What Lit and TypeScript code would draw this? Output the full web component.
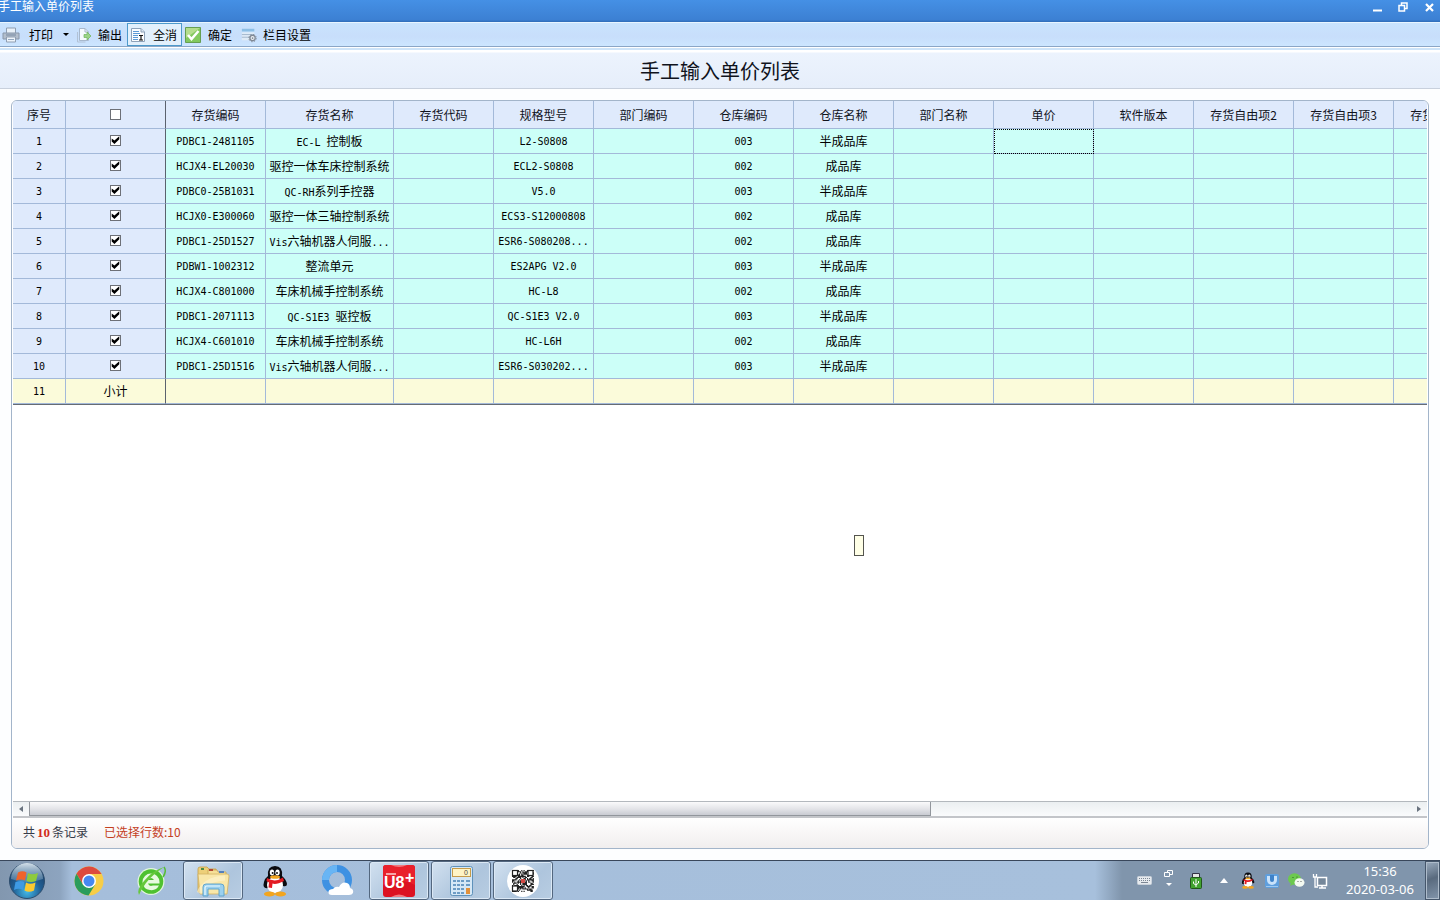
import { LitElement, html, css, svg } from "lit";
import { customElement, state } from "lit/decorators.js";
import { classMap } from "lit/directives/class-map.js";

interface Row {
  code: string;
  name: string;
  spec: string;
  depot: string;
  depotName: string;
}

const row = (code: string, name: string, spec: string, depot: string): Row => ({
  code, name, spec, depot, depotName: depot === "003" ? "半成品库" : "成品库",
});

const ROWS: Row[] = [
  row("PDBC1-2481105", "EC-L 控制板", "L2-S0808", "003"),
  row("HCJX4-EL20030", "驱控一体车床控制系统", "ECL2-S0808", "002"),
  row("PDBC0-25B1031", "QC-RH系列手控器", "V5.0", "003"),
  row("HCJX0-E300060", "驱控一体三轴控制系统", "ECS3-S12000808", "002"),
  row("PDBC1-25D1527", "Vis六轴机器人伺服...", "ESR6-S080208...", "002"),
  row("PDBW1-1002312", "整流单元", "ES2APG V2.0", "003"),
  row("HCJX4-C801000", "车床机械手控制系统", "HC-L8", "002"),
  row("PDBC1-2071113", "QC-S1E3 驱控板", "QC-S1E3 V2.0", "003"),
  row("HCJX4-C601010", "车床机械手控制系统", "HC-L6H", "002"),
  row("PDBC1-25D1516", "Vis六轴机器人伺服...", "ESR6-S030202...", "003"),
];

const HEADERS = ["存货编码", "存货名称", "存货代码", "规格型号", "部门编码", "仓库编码", "仓库名称", "部门名称", "单价", "软件版本", "存货自由项2", "存货自由项3", "存货自由项4"];

/* Latin runs are set smaller than the Chinese ones so both sit on a half-width grid. */
const mixed = (text: string) =>
  text.split(/([\u4e00-\u9fff]+)/).filter(Boolean).map((part) =>
    /[\u4e00-\u9fff]/.test(part) ? html`<span class="han">${part}</span>` : part);

const penguin = svg`
  <path d="M7 23 Q1 24 3 17 Q4 13 7 11 Q6 1 14 1 Q22 1 21 11 Q25 14 26 19 Q26 22 22 21Z" fill="#0b0b10"/>
  <ellipse cx="14" cy="20" rx="8" ry="8" fill="#fff"/>
  <ellipse cx="11" cy="7.500" rx="2.200" ry="3" fill="#fff"/><ellipse cx="16.500" cy="7.500" rx="2.200" ry="3" fill="#fff"/>
  <circle cx="11.600" cy="8" r="1" fill="#111"/><circle cx="16" cy="8" r="1" fill="#111"/>
  <ellipse cx="14" cy="12" rx="5" ry="1.800" fill="#f3a51f"/>
  <path d="M6 13 Q14 18 22 12.500 L23 16 Q15 20 11.500 18.500 L11 23 L7.500 22.500 L8 17.500 L5.500 16Z" fill="#e31b23"/>
  <ellipse cx="8.500" cy="29" rx="5.500" ry="2.500" fill="#f3a51f"/><ellipse cx="19.500" cy="29" rx="5.500" ry="2.500" fill="#f3a51f"/>`;

const chrome = svg`
  <circle cx="15" cy="15" r="14.500" fill="#f7cd47"/>
  <path d="M2.500 7.700 A14.500 14.500 0 0 1 27.600 8 L15 8 L9 18.500Z" fill="#dd4a3f"/>
  <path d="M2.500 7.700 A14.500 14.500 0 0 0 14.500 29.500 L21.200 18.500 L15 21.500 L8.900 18.500Z" fill="#2a9c5b"/>
  <circle cx="15" cy="15" r="7" fill="#fff"/><circle cx="15" cy="15" r="5.500" fill="#4688f1"/>`;

const browserE = svg`
  <circle cx="15" cy="15.500" r="13.500" fill="#e4f6df"/>
  <circle cx="15" cy="15.500" r="12.300" fill="#4fc131"/>
  <path d="M6.500 16 A8.500 8.500 0 0 1 23.500 16 V17.500 H12 Q13 21 17 19.500 H23 Q20 25 14 24 Q7 23 6.500 16Z" fill="#e8fae0"/>
  <path d="M12 14 Q15 10 18 14Z" fill="#4fc131"/>
  <path d="M3 29 Q0 24 8 15 Q16 5 28 1 Q16 9 10 17 Q5 24 3 29Z" fill="#66c83c"/>
  <path d="M28 1 Q31 5 27 11" fill="none" stroke="#58bd38" stroke-width="1.500"/>`;

const folder = svg`
  <path d="M2 4 Q2 2 4 2 H11 L13 4 H20 V27 H2Z" fill="#edcf79" stroke="#c79f45" stroke-width=".8"/>
  <path d="M12 5 H21 L22 7 H30 V28 H12Z" fill="#f6df97" stroke="#caa452" stroke-width=".8"/>
  <path d="M5 3 h3 v2 h-3z" fill="#4b8b45"/><path d="M13 4 h4 v2 h-4z" fill="#b54b32"/><path d="M23 6 h5 v2 h-5z" fill="#547fbb"/>
  <path d="M2 9 H31 Q33 9 33 11 L31 29 H4Z" fill="#f9e7a9" stroke="#d4b262" stroke-width=".8"/>
  <path d="M3 28 Q9 14 29 13" stroke="#fff6d5" stroke-width="5" fill="none" opacity=".55"/>
  <path d="M7 31 V22 Q7 19 10 19 H25 Q28 19 28 22 V31 H23 V24 H12 V31Z" fill="#9bd0ee" stroke="#589fc9" stroke-width=".9"/>
  <path d="M9 30 V23 Q9 21 11 21 H24" fill="none" stroke="#e9faff" stroke-width="1.200"/>`;

const cloudRing = svg`
  <circle cx="16" cy="15" r="11.500" fill="none" stroke="#3e91e2" stroke-width="7"/>
  <path d="M4.500 15 A11.500 11.500 0 0 1 16 3.500" fill="none" stroke="#68b5f4" stroke-width="7"/>
  <path d="M11 30 Q7 30 7.500 26.500 Q8 24 12 24 Q14 21 18 22 Q21 16 26 18 Q29 19 29 23 Q33 24 32 28 Q31 30 28 30Z" fill="#fff"/>`;

const u8 = svg`
  <rect width="32" height="32" rx="3" fill="#dc1222"/>
  <path d="M0 20 Q16 12 32 20 V3 Q32 0 29 0 H3 Q0 0 0 3Z" fill="#e9202c"/>
  <path d="M3 9 H13" stroke="#fff" stroke-width="1.200"/>
  <text class="logo" x="1" y="23">U8</text>
  <text class="logo plus" x="22" y="18">+</text>
  <path d="M8 32 Q16 27 24 32Z" fill="#f07a80"/><path d="M8 0 Q16 4 24 0Z" fill="#f07a80"/>`;

const calculator = svg`
  <rect x=".5" y=".5" width="22" height="29" rx="2" fill="#d6e8f6" stroke="#5f92bb"/>
  <rect x="2.500" y="2.500" width="18" height="8" fill="#fff4c5" stroke="#c69b4a"/>
  <text class="digit" x="14" y="9">0</text>
  <g fill="#6d9cc5">${[14, 18, 22, 26].map((y) => [3, 7, 11].map((x) => svg`<rect x=${x} y=${y} width="3" height="2"/>`))}<rect x="16" y="14" width="4" height="2"/><rect x="16" y="18" width="4" height="2"/></g>
  <rect x="16" y="22" width="4" height="6" fill="#e2913a"/>`;

const qrCells: number[][] = [];
for (let y = 0; y < 19; y++) {
  for (let x = 0; x < 19; x++) {
    if ((x * 7 + y * 11 + x * y * 5 + ((x * x) ^ (y * 3))) % 5 < 3) qrCells.push([x, y]);
  }
}
const qr = svg`
  <circle cx="16" cy="16" r="16" fill="#fff"/>
  <path fill="#222" d=${qrCells.map(([x, y]) => `M${5 + x * 1.15} ${5 + y * 1.15}h1.200v1.200h-1.200z`).join("")}></path>
  <g fill="#fff" stroke="#222" stroke-width="1.200"><rect x="5.500" y="5.500" width="5" height="5"/><rect x="21" y="5.500" width="5" height="5"/><rect x="5.500" y="21" width="5" height="5"/></g>
  <rect x="14" y="14" width="4" height="4" fill="#d34a44"/>`;

const orb = svg`
  <defs>
    <radialGradient id="orb" cx=".5" cy=".8" r=".8"><stop offset="0" stop-color="#43b9e8"/><stop offset=".5" stop-color="#205d92"/><stop offset="1" stop-color="#1b3a5f"/></radialGradient>
    <linearGradient id="gloss" x1="0" y1="0" x2="0" y2="1"><stop offset="0" stop-color="#e8f3fa" stop-opacity=".9"/><stop offset="1" stop-color="#a9c8dd" stop-opacity=".25"/></linearGradient>
  </defs>
  <circle cx="18" cy="18" r="17.500" fill="url(#orb)" stroke="#2d4d6d"/>
  <path d="M2 16 A16 16 0 0 1 34 16 Q18 22 2 16Z" fill="url(#gloss)"/>
  <path d="M9 9.500 Q13.500 7 17.500 9.500 L16 17.500 Q12 15.500 7 17.500Z" fill="#f0642a"/>
  <path d="M19 10 Q23 12.500 29 10 L27 18 Q22 20 17.500 18Z" fill="#8ecb3c"/>
  <path d="M6.500 19 Q12 17 15.500 19 L14 27 Q10 24.500 5 27Z" fill="#3e9ae4"/>
  <path d="M17 19.500 Q21 22 26.500 19.500 L25 27.500 Q20 30 15.500 27.500Z" fill="#fbc92f"/>`;

@customElement("app-root")
export class AppRoot extends LitElement {
  @state() private checked: boolean[] = ROWS.map(() => true);

  static styles = css`
    :host {
      display: flex;
      flex-direction: column;
      height: 100vh;
      overflow: hidden;
      position: relative;
      background: #fdfeff;
      color: #10131c;
      font: 12px/16px "Noto Sans CJK SC", sans-serif;
    }
    * { box-sizing: border-box; }
    svg { display: block; flex: none; }
    button { font: inherit; color: inherit; border: 0; padding: 0; background: none; }
    h1 { margin: 0; font: inherit; }
    .logo { font: bold 16px "Liberation Sans", sans-serif; fill: #fff; }
    .digit { font: 7px "Liberation Sans", sans-serif; fill: #4a4a40; }

    .titlebar {
      display: flex;
      justify-content: space-between;
      height: 22px;
      flex: none;
      padding-right: 5px;
      background: linear-gradient(#4590e5, #3c80d3 90%, #2f6bb6);
      color: #fff;
      line-height: 12px;
    }
    .caption { margin-left: -2px; }
    .controls { display: flex; gap: 14px; height: 14px; }
    .controls button { width: 12px; display: grid; place-items: center; }

    .toolbar {
      display: flex;
      align-items: center;
      flex: none;
      height: 25px;
      padding: 0 2px;
      border-top: 1px solid #e8f5ff;
      border-bottom: 1px solid #8ba6c6;
      background: linear-gradient(#c9e3fd, #c8defb 60%, #cce6ff);
      color: #000;
    }
    .tool { display: flex; align-items: center; gap: 6px; height: 23px; padding: 0 4px 0 1px; }
    .tool.wide { gap: 9px; padding-left: 0; }
    .tool.pressed { gap: 8px; border: 1px solid #4e9acb; background: #e2f0fc; padding: 0 4px 0 3px; margin: 0 2px 0 1px; }
    .tool.confirm { gap: 7px; padding-right: 8px; }
    .drop { width: 16px; height: 23px; display: grid; place-items: center; margin: 0 1px; }

    .heading {
      flex: none;
      display: grid;
      place-items: center;
      height: 42px;
      border-top: 1px solid #fff;
      border-bottom: 1px solid #c8d0dc;
      background: linear-gradient(#cde4f9 2px, #fff 2px, #fff 4px, #ecf3fd 5px, #e6eefa);
      font-size: 20px;
      line-height: 28px;
    }
    .heading h1 { padding-top: 5px; }

    .panel {
      flex: 1;
      min-height: 0;
      margin: 11px;
      display: flex;
      flex-direction: column;
      border: 1px solid #a3b5ca;
      border-radius: 6px;
      padding: 0 1px;
      overflow: hidden;
      background: #fff;
    }
    .viewport { flex: 1; overflow: hidden; min-height: 0; }
    table { border-collapse: separate; border-spacing: 0; table-layout: fixed; width: 1481px; border-bottom: 1px solid #666c74; }
    .c-no { width: 53px; }
    .c-std { width: 100px; }
    .c-name { width: 128px; }
    th, td {
      height: 25px;
      padding: 0;
      border-right: 1px solid #a3b9d9;
      border-bottom: 1px solid #a3b9d9;
      text-align: center;
      font-weight: normal;
      white-space: nowrap;
      overflow: hidden;
      line-height: 16px;
    }
    th { height: 28px; background: #dfeafc; }
    td { padding-top: 2px; background: #ccfff8; font: 10px/16px "DejaVu Sans Mono", monospace; color: #000; }
    .han { font: 12px/16px "Noto Sans CJK SC", sans-serif; }
    .fixed { background: #dfeafc; }
    .pick { padding: 0 0 2px; }
    .edge { border-right-color: #5b626e; }
    .sum td { background: #fbfbda; }
    .focus { outline: 1px dotted #000; outline-offset: -1px; }
    .tick {
      appearance: none;
      display: block;
      width: 11px;
      height: 11px;
      margin: 0 auto;
      border: 1px solid #6d7077;
      background: #fff;
    }
    .tick:checked::before {
      content: "";
      display: block;
      width: 9px;
      height: 9px;
      background: #000;
      clip-path: polygon(8% 32%, 38% 56%, 92% 8%, 92% 42%, 38% 94%, 8% 66%);
    }

    .scroll {
      flex: none;
      display: flex;
      height: 17px;
      border-top: 1px solid #b3b8bd;
      border-bottom: 2px solid #c3c5c9;
      background: linear-gradient(#ebeff1, #fafbfc);
    }
    .scroll button { width: 16px; display: grid; place-items: center; }
    .track { flex: 1; display: flex; }
    .thumb { width: 65.3%; border: 1px solid #92969c; border-top: 0; background: linear-gradient(#fafafb, #e2e3e7 55%, #c9cbd2); }
    .status {
      flex: none;
      display: flex;
      gap: 16px;
      align-items: center;
      height: 30px;
      margin: 0 -1px;
      padding: 0 11px 2px;
      background: linear-gradient(#fff, #f1eeee);
      color: #353a48;
    }
    .count { font: bold 13px/16px "Liberation Serif", serif; color: #d12a18; padding: 0 2px; }
    .picked { color: #c4401f; }

    .hint { position: absolute; left: 854px; top: 535px; width: 10px; height: 21px; border: 1px solid #55554f; background: #ffffe6; }

    .taskbar {
      flex: none;
      display: flex;
      gap: 2px;
      height: 40px;
      border-top: 1px solid #39475b;
      background: linear-gradient(90deg, #8297af, #8da4bf 60px, #a5bedb 72px, #a7c0dc calc(100% - 345px), #8095ac calc(100% - 318px));
    }
    .start { width: 57px; display: grid; align-items: center; padding-left: 9px; }
    .task { width: 60px; display: grid; place-items: center; border-radius: 3px; }
    .task.open { border: 1px solid #53677f; box-shadow: inset 0 0 0 1px #dbe8f5; background: linear-gradient(135deg, #d2e1f0, #aec5dd 60%, #b8cde2); }
    .tray { margin-left: auto; display: flex; align-items: center; color: #fff; }
    .tray button { width: 24px; display: grid; place-items: center; }
    .tray .tall { width: 32px; }
    .clock { width: 93px; padding: 0 0 2px 3px; text-align: center; font: 13px/18px "Noto Sans", sans-serif; }
    .tray .desk { align-self: stretch; width: 15px; border: 1px solid #45566b; box-shadow: inset 0 0 0 1px #aebccb; background: linear-gradient(160deg, #9aabbe, #596a7e 45%, #8295ab); }
  `;

  private toggle(i: number, value: boolean) {
    this.checked = this.checked.map((v, k) => (k === i ? value : v));
  }

  private task(label: string, w: number, h: number, art: unknown, open = false) {
    return html`<button class=${classMap({ task: true, open })} aria-label=${label}>
      <svg width=${w} height=${h} viewBox="0 0 ${w} ${h}">${art}</svg>
    </button>`;
  }

  private renderToolbar() {
    return html`<nav class="toolbar" aria-label="工具栏">
      <button class="tool wide">
        <svg width="18" height="16" viewBox="0 0 18 16"><path d="M4.500 6 V1 H13.500 V6" fill="#e9f1f8" stroke="#8f9eb1"/><path d="M1 6 H17 V12 H1Z" fill="#b3becc" stroke="#8897aa"/><path d="M4 6.500 V9 H14 V6.500" fill="#94a3b6"/><path d="M4.500 10 H13.500 V15 H4.500Z" fill="#eef4fa" stroke="#8f9eb1"/><path d="M6 12.500 H12" stroke="#94a9c2"/></svg>打印
      </button>
      <button class="drop" aria-label="打印选项"><svg width="6" height="3" viewBox="0 0 6 3"><path d="M0 0H6L3 3Z" fill="#000"/></svg></button>
      <button class="tool">
        <svg width="16" height="16" viewBox="0 0 16 16"><path d="M3.500 1.500 H9 L12.500 5 V13.500 H3.500Z" fill="#f6fafe" stroke="#a8b9cd"/><path d="M9 1.500 V5 H12.500" fill="none" stroke="#a8b9cd"/><path d="M1.500 5 V15 H9.500" fill="none" stroke="#b2c2d5"/><path d="M8 7.500 H11 V5 L15 9 L11 13 V10.500 H8Z" fill="#9bd487" stroke="#6db35a" stroke-width=".7"/></svg>输出
      </button>
      <button class="tool pressed">
        <svg width="14" height="16" viewBox="0 0 14 16"><path d="M.5 1.500 H10 L13.500 5 V14.500 H.5Z" fill="#fbfdff" stroke="#8ea2b9"/><path d="M10 1.500 V5 H13.500" fill="#d9e6f2" stroke="#8ea2b9"/><path d="M2 4.500 H8 M2 6.500 H9 M2 8.500 H7 M2 10.500 H7 M2 12.500 H7" stroke="#5c9ad6"/><path d="M8 8.500 H12 M10 8 V13 M8 13 H12" stroke="#111" stroke-width="1.200"/></svg>全消
      </button>
      <button class="tool confirm">
        <svg width="16" height="16" viewBox="0 0 16 16"><path d="M.5 .5 H15.500 V15.500 H.5Z" fill="#82c95e" stroke="#669f52"/><path d="M1 1 H15 L1 11Z" fill="#b4dd8d"/><path d="M3 8 L6.500 12 L13.500 4" fill="none" stroke="#fff" stroke-width="2.500"/></svg>确定
      </button>
      <button class="tool">
        <svg width="16" height="16" viewBox="0 0 18 16"><path d="M1 1 H15 V4 H1Z" fill="#8dbfe5"/><path d="M1 5 H15 V14 H1Z" fill="#dfebf7"/><path d="M1 7.500 H15 M1 10.500 H10" stroke="#9eb2c9"/><circle cx="13" cy="11.500" r="3" fill="#eef1f5" stroke="#7f8894" stroke-width="1.500"/><circle cx="13" cy="11.500" r="4.200" fill="none" stroke="#7f8894" stroke-dasharray="1.600 1.700"/><circle cx="13" cy="11.500" r="1" fill="#7f8894"/></svg>栏目设置
      </button>
    </nav>`;
  }

  private renderTable() {
    return html`<div class="viewport"><table>
      <colgroup><col class="c-no" /><col class="c-std" /><col class="c-std" /><col class="c-name" />${HEADERS.slice(2).map(() => html`<col class="c-std" />`)}</colgroup>
      <thead><tr>
        <th>序号</th>
        <th class="edge"><input class="tick" type="checkbox" aria-label="全选" /></th>
        ${HEADERS.map((h) => html`<th>${h}</th>`)}
      </tr></thead>
      <tbody>
        ${ROWS.map((r, i) => html`<tr>
          <td class="fixed">${i + 1}</td>
          <td class="fixed edge pick"><input class="tick" type="checkbox" aria-label="选择 ${r.code}" .checked=${this.checked[i]} @change=${(e: Event) => this.toggle(i, (e.target as HTMLInputElement).checked)} /></td>
          <td>${r.code}</td><td>${mixed(r.name)}</td><td></td><td>${r.spec}</td><td></td>
          <td>${r.depot}</td><td>${mixed(r.depotName)}</td><td></td>
          <td class=${classMap({ focus: i === 0 })}></td><td></td><td></td><td></td><td></td>
        </tr>`)}
        <tr class="sum"><td>11</td><td class="edge">${mixed("小计")}</td>${HEADERS.map(() => html`<td></td>`)}</tr>
      </tbody>
    </table></div>`;
  }

  private renderTaskbar() {
    return html`<footer class="taskbar">
      <button class="start" aria-label="开始"><svg width="36" height="36" viewBox="0 0 36 36">${orb}</svg></button>
      ${this.task("Chrome", 30, 30, chrome)}
      ${this.task("浏览器", 30, 30, browserE)}
      ${this.task("资源管理器", 34, 32, folder, true)}
      ${this.task("QQ", 28, 32, penguin)}
      ${this.task("QQ浏览器", 33, 31, cloudRing)}
      ${this.task("U8+", 32, 32, u8, true)}
      ${this.task("计算器", 23, 30, calculator, true)}
      ${this.task("二维码", 32, 32, qr, true)}
      <div class="tray">
        <button aria-label="键盘"><svg width="15" height="9" viewBox="0 0 15 9"><rect x=".5" y=".5" width="14" height="8" rx="1" fill="#e6eaee" stroke="#c9d1da"/><path d="M2 2.500 H13 M2 4.500 H13" stroke="#7c8794" stroke-dasharray="1 1"/><path d="M4 6.500 H11" stroke="#7c8794"/></svg></button>
        <button aria-label="语言栏"><svg width="9" height="24" viewBox="0 0 9 24"><path d="M3.500 3 V1.500 H8.500 V5.500 H6 M.5 3.500 H5.500 V7.500 H.5Z" fill="none" stroke="#fff"/><path d="M2 14 H8 L5 17Z" fill="#fff"/></svg></button>
        <button class="tall" aria-label="USB"><svg width="12" height="16" viewBox="0 0 12 16"><path d="M2.500 .5 H9.500 V5 H2.500Z" fill="#e4e8e4" stroke="#334"/><rect x=".5" y="4.500" width="11" height="11" rx="1" fill="#41a32f" stroke="#22571b"/><path d="M6 6 V14 M3.500 8.500 V10.500 L6 12 L8.500 10 V8" fill="none" stroke="#fff"/></svg></button>
        <button aria-label="显示隐藏的图标"><svg width="8" height="5" viewBox="0 0 8 5"><path d="M0 5 L4 0 L8 5Z" fill="#fff"/></svg></button>
        <button aria-label="QQ"><svg width="16" height="17" viewBox="0 0 28 32">${penguin}</svg></button>
        <button aria-label="安全"><svg width="16" height="16" viewBox="0 0 16 16"><rect x="1" y="1" width="14" height="14" rx="2" fill="#5f9fdd"/><path d="M3 3 H13 V7 A5 5 0 0 1 3 7Z" fill="#c9e2fa"/><path d="M6 2 V7 A2 2 0 0 0 10 7 V2Z" fill="#3e82c9"/><path d="M2 13.500 H14" stroke="#9fc9f0"/></svg></button>
        <button aria-label="微信"><svg width="17" height="15" viewBox="0 0 17 15"><ellipse cx="6.500" cy="6" rx="6.500" ry="5.800" fill="#6cc94e"/><path d="M3 10 L2 13 L6 11Z" fill="#6cc94e"/><ellipse cx="11.500" cy="9.500" rx="5" ry="4.300" fill="#f4faf1"/><circle cx="5" cy="4.500" r=".6" fill="#285b1d"/><circle cx="9" cy="4" r=".6" fill="#285b1d"/><circle cx="10" cy="8.500" r=".6" fill="#555"/><circle cx="13" cy="8.500" r=".6" fill="#555"/></svg></button>
        <button aria-label="网络"><svg width="16" height="16" viewBox="0 0 16 16"><path d="M5.500 4.500 H14.500 V12.500 H5.500Z" fill="#75879a" stroke="#fff" stroke-width="1.500"/><path d="M7 15 H14 M10 13 V15" stroke="#fff" stroke-width="1.500"/><path d="M1.500 1 V4 H4.500 V1 M3 4 V14 H6" fill="none" stroke="#fff" stroke-width="1.300"/></svg></button>
        <div class="clock"><div>15:36</div><div>2020-03-06</div></div>
        <button class="desk" aria-label="显示桌面"></button>
      </div>
    </footer>`;
  }

  render() {
    return html`
      <header class="titlebar">
        <span class="caption">手工输入单价列表</span>
        <div class="controls">
          <button aria-label="最小化"><svg width="9" height="10" viewBox="0 0 9 10"><path d="M0 8.500 H9" stroke="#fff" stroke-width="2"/></svg></button>
          <button aria-label="还原"><svg width="10" height="10" viewBox="0 0 10 10"><path d="M3.500 3 V1 H9 V6.500 H7 M1 3.500 H6.500 V9 H1Z" fill="none" stroke="#fff" stroke-width="1.500"/></svg></button>
          <button aria-label="关闭"><svg width="9" height="9" viewBox="0 0 9 9"><path d="M1 1 L8 8 M8 1 L1 8" stroke="#fff" stroke-width="2.200"/></svg></button>
        </div>
      </header>
      ${this.renderToolbar()}
      <div class="heading"><h1>手工输入单价列表</h1></div>
      <main class="panel">
        ${this.renderTable()}
        <div class="scroll">
          <button aria-label="向左滚动"><svg width="4" height="6" viewBox="0 0 4 6"><path d="M4 0V6L0 3Z" fill="#69737f"/></svg></button>
          <div class="track"><div class="thumb"></div></div>
          <button aria-label="向右滚动"><svg width="4" height="6" viewBox="0 0 4 6"><path d="M0 0V6L4 3Z" fill="#69737f"/></svg></button>
        </div>
        <div class="status"><span>共<span class="count">10</span>条记录</span><span class="picked">已选择行数:10</span></div>
      </main>
      <div class="hint"></div>
      ${this.renderTaskbar()}
    `;
  }
}
